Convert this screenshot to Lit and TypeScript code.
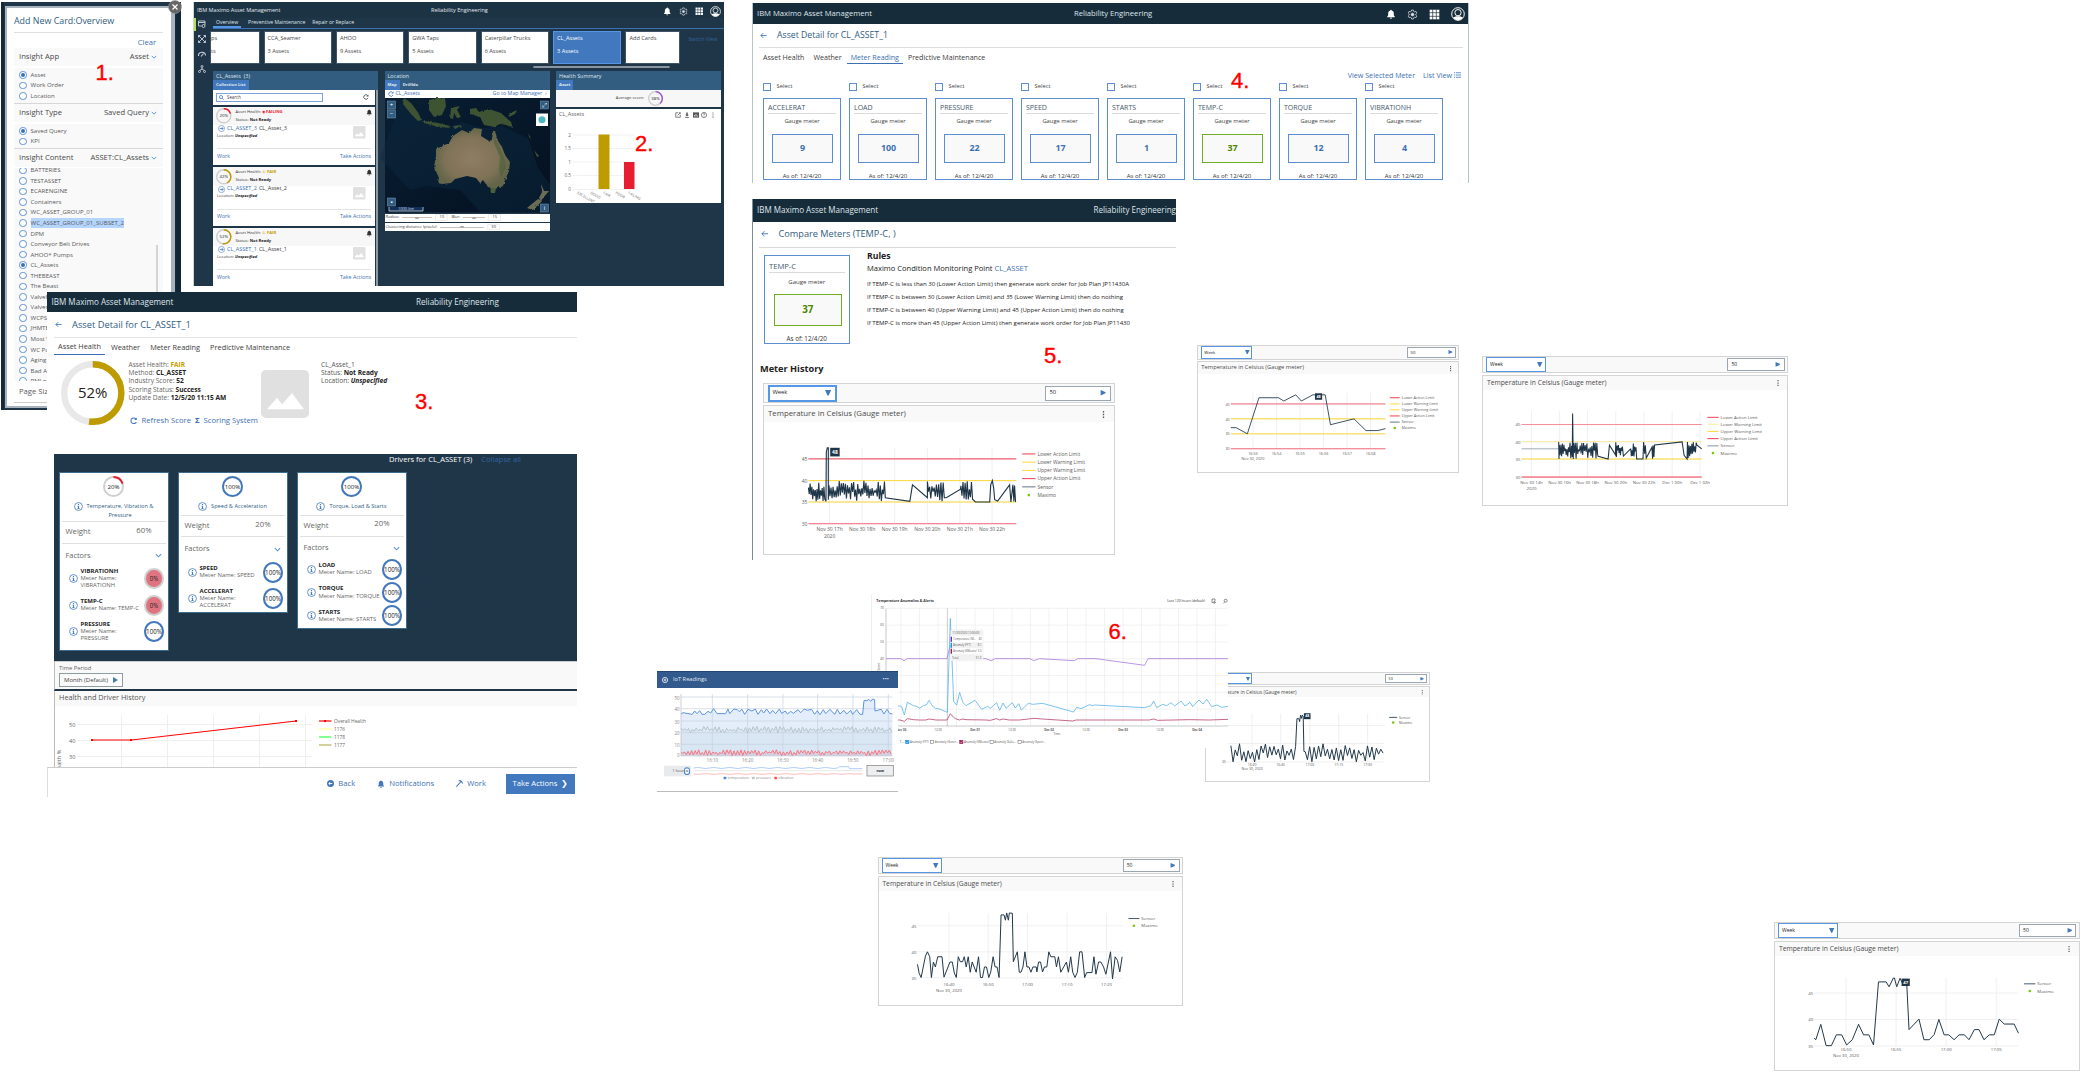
import { LitElement, html, css, svg, nothing } from "lit";
import { customElement, property } from "lit/decorators.js";

const base = css`
  :host { display: block; box-sizing: border-box; font-family: "Open Sans", "Noto Sans", sans-serif; color: #3c3c3c; line-height: 1; white-space: nowrap; }
  * { box-sizing: border-box; }
  svg { display: block; flex: none; overflow: visible; }
  b { font-weight: 700; color: #222; }
  .row { display: flex; align-items: center; }
  .grow { flex: 1; }
  .link { color: #3d70b2; }
  .bar { display: flex; align-items: center; background: #172c3b; color: #dfe5ea; }
`;

/* ---------- icons ---------- */
const bell = (s: number, c: string) => html`<svg width=${s} height=${s} viewBox="0 0 16 16"><path fill=${c} d="M8 1c-.7 0-1.2.5-1.2 1.2C4.6 2.800 3.500 4.500 3.500 6.800V10L2 12v1h12v-1l-1.500-2V6.800c0-2.300-1.100-4-3.300-4.600C9.200 1.500 8.700 1 8 1zM6.300 14a1.700 1.700 0 0 0 3.400 0z"/></svg>`;
const gear = (s: number, c: string) => html`<svg width=${s} height=${s} viewBox="0 0 16 16" fill="none" stroke=${c}><path stroke-width="1.100" d="M6.700 1.500h2.600l.4 1.800 1.500.8 1.800-.6 1.300 2.200-1.400 1.300v2l1.400 1.300-1.300 2.200-1.800-.6-1.500.8-.4 1.800H6.700l-.4-1.800-1.500-.8-1.800.6-1.300-2.200L3.100 9V7L1.700 5.700 3 3.500l1.800.6 1.500-.8z"/><circle cx="8" cy="8" r="2" fill=${c}/></svg>`;
const apps = (s: number, c: string) => html`<svg width=${s} height=${s} viewBox="0 0 16 16" fill=${c}>${[1, 6, 11].map(y => [1, 6, 11].map(x => svg`<rect x=${x} y=${y} width="4" height="4"/>`))}</svg>`;
const avatar = (s: number) => html`<svg width=${s} height=${s} viewBox="0 0 16 16"><circle cx="8" cy="8" r="7.200" fill="none" stroke="#fff" stroke-width="1.100"/><circle cx="8" cy="6.500" r="3.600" fill="none" stroke="#fff" stroke-width="1.100"/><path d="M2.500 12c3-2 8-2 11 0-1.300 2-3.300 3.200-5.500 3.200S3.800 14 2.500 12z" fill="#fff"/></svg>`;
const back = (s: number) => html`<svg width=${s} height=${s} viewBox="0 0 16 16" fill="none" stroke="#4178be" stroke-width="2"><path d="M15 8H2M7.500 2.500L2 8l5.500 5.500"/></svg>`;
const chevron = (s: number) => html`<svg width=${s} height=${s} viewBox="0 0 16 16" fill="none" stroke="#5596e6" stroke-width="2.600"><path d="M2 5l6 6 6-6"/></svg>`;
const refresh = (s: number, c: string) => html`<svg width=${s} height=${s} viewBox="0 0 16 16" fill="none" stroke=${c} stroke-width="2.200"><path d="M13.500 10.500A6 6 0 1 1 12.500 4"/><path d="M14.500 1v5.500H9z" fill=${c} stroke="none"/></svg>`;
const info = (s: number) => html`<svg width=${s} height=${s} viewBox="0 0 16 16"><circle cx="8" cy="8" r="7" fill="none" stroke="#4178be" stroke-width="1.400"/><path fill="#4178be" d="M7 3.500h2v2H7zM6.200 6.700H9v4.500h1v1.300H6v-1.300h1.200V8h-1z"/></svg>`;
const go = (s: number) => html`<svg width=${s} height=${s} viewBox="0 0 16 16" fill="none" stroke="#4178be" stroke-width="1.300"><circle cx="8" cy="8" r="7"/><path stroke-width="1.800" d="M4 8h7.500M8.500 4.800L11.700 8l-3.200 3.200"/></svg>`;
const picture = (w: number, h: number, cls: string) => html`<svg class=${cls} width=${w} height=${h} viewBox="0 0 48 50" preserveAspectRatio="none"><rect width="48" height="50" rx="5" fill="#e0e0e0"/><path fill="#fff" d="M6 41l10-12 5 7 10-12 12 17z"/></svg>`;
const kebab = (s: number) => html`<svg width=${s} height=${s} viewBox="0 0 16 16" fill="#555"><path d="M6.800 1h2.400v2.800H6.800zM6.800 6.600h2.400v2.800H6.800zM6.800 12.200h2.400V15H6.800z"/></svg>`;

const ring = (w: number, h: number, pct: number, color: string, label: string, fs: number, sw: number, fill = "none", track = "#cfcfcf") => {
  const r = 50 - sw / 2, c = 2 * Math.PI * r;
  return html`<svg width=${w} height=${h} viewBox="0 0 100 100" preserveAspectRatio="none">
    <circle cx="50" cy="50" r=${r} fill=${fill} stroke=${track} stroke-width=${sw}/>
    <circle cx="50" cy="50" r=${r} fill="none" stroke=${color} stroke-width=${sw} stroke-dasharray="${(c * pct) / 100} ${c}" transform="rotate(-90 50 50)"/>
    <text x="50" y="50" dy=".36em" text-anchor="middle" font-size=${fs} fill="#222">${label}</text></svg>`;
};

/* ---------- chart data helpers ---------- */
const noise = (x0: number, x1: number, step: number, hi: number, lo: number, seed: number) => {
  let s = seed, up = true, out = "";
  for (let x = x0; x <= x1; x += step) {
    s = (s * 16807) % 2147483647;
    const f = (s % 1000) / 1000, mid = (hi + lo) / 2;
    out += `${x.toFixed(1)},${(up ? hi + f * (mid - hi) : lo - f * (lo - mid)).toFixed(1)} `;
    up = !up;
  }
  return out;
};

interface Chart {
  box: string; fs: number; x0: number; x1: number; y0: number; y1: number;
  ys: [string, number][]; xs: [string, number][]; sub: [string, number, number]; xl: number;
  limits: [number, string][]; line: string; faint?: string; sw: number;
  lx: number; lw: number; ly: number[]; legend: [string, string][]; badge?: [string, number, number];
}
const RED = "#ef3b4d", YEL = "#fdd835", PALE = "#fdeb9a", INK = "#1f3648";
const limitsLegend: [string, string][] = [["Lower Action Limit", RED], ["Lower Warning Limit", YEL], ["Upper Warning Limit", YEL], ["Upper Action Limit", RED], ["Sensor", "#5f7482"], ["Maximo", ""]];
const sensorLegend: [string, string][] = [["Sensor", "#41586a"], ["Maximo", ""]];

const charts: Record<string, Chart> = {
  main: {
    box: "52 631 1056 449", fs: 15, x0: 186, x1: 813, y0: 757, y1: 988, ys: [["45", 791], ["40", 857], ["35", 922], ["30", 988]],
    xs: [["Nov 30 17h", 250], ["Nov 30 18h", 348], ["Nov 30 19h", 446], ["Nov 30 20h", 545], ["Nov 30 21h", 643], ["Nov 30 22h", 740]],
    sub: ["2020", 250, 1026], xl: 1006, limits: [[791, RED], [857, YEL], [922, YEL], [988, "#f4667a"]], sw: 3.4,
    line: noise(186, 237, 2.6, 857, 922, 7) + "239,920 240,770 243,757 246,757 246,915 " + noise(248, 416, 3.1, 857, 922, 91) + "418,909 492,920 500,870 545,909 " + noise(545, 595, 3.4, 857, 922, 41) + "596,909 602,909 645,883 " + noise(646, 684, 3.2, 857, 922, 13) + "690,922 733,922 736,870 741,857 745,880 748,915 757,919 793,870 797,922 803,870 806,920 808,872 811,922",
    lx: 831, lw: 40, ly: [776, 801, 826, 851, 876, 901], legend: limitsLegend, badge: ["48", 266, 770],
  },
  early: {
    box: "37 66 785 337", fs: 11.4, x0: 136, x1: 603, y0: 160, y1: 332, ys: [["45", 195], ["40", 240], ["35", 286], ["30", 332]],
    xs: [["16:53", 203], ["16:54", 274], ["16:55", 345], ["16:56", 416], ["16:57", 487], ["16:58", 558]], sub: ["Nov 30, 2020", 203, 362], xl: 348,
    limits: [[194, "#f4667a"], [240, YEL], [286, YEL], [332, "#f4667a"]], sw: 2.6,
    line: "136,267 152,267 186,286 221,175 280,175 296,185 332,166 349,185 384,166 421,166 437,258 508,240 544,276 580,276 603,270",
    lx: 616, lw: 30, ly: [175, 194, 212, 231, 250, 268], legend: limitsLegend, badge: ["48", 401, 171],
  },
  wide: {
    box: "37 94 916 391", fs: 13, x0: 153, x1: 696, y0: 200, y1: 401, ys: [["45", 241], ["40", 294], ["35", 347], ["30", 401]],
    xs: [["Nov 30 14h", 183], ["Nov 30 16h", 268], ["Nov 30 18h", 352], ["Nov 30 20h", 437], ["Nov 30 22h", 522], ["Dec 1 00h", 607], ["Dec 1 02h", 691]],
    sub: ["2020", 183, 437], xl: 419, limits: [[241, "#f78a98"], [293, PALE], [346, YEL], [401, RED]], sw: 3.2, faint: "153,315 266,315",
    line: "265,294 266,346 " + noise(267, 305, 2.3, 294, 346, 19) + "306,340 307,207 309,346 " + noise(310, 383, 2.5, 294, 346, 77) + "384,338 414,346 418,304 436,333 " + noise(437, 457, 2, 294, 346, 5) + "460,337 482,315 " + noise(482, 498, 2, 294, 346, 53) + "500,346 519,346 521,294 524,330 526,304 529,343 546,310 548,345 550,305 552,340 554,303 637,294 643,335 652,346 " + noise(653, 680, 2.2, 294, 346, 31) + "682,304 696,315",
    lx: 713, lw: 34, ly: [219, 240, 262, 284, 306, 328], legend: [["Lower Action Limit", RED], ["Lower Warning Limit", PALE], ["Upper Warning Limit", YEL], ["Upper Action Limit", RED], ["Sensor", "#8394a0"], ["Maximo", ""]],
  },
  half: {
    box: "23 78 915 388", fs: 13, x0: 139, x1: 756, y0: 186, y1: 383, ys: [["45", 225], ["40", 304], ["35", 383]],
    xs: [["16:40", 234], ["16:50", 352], ["17:00", 471], ["17:10", 590], ["17:20", 709]], sub: ["Nov 30, 2020", 234, 420], xl: 402, limits: [], sw: 3,
    line: "139,342 144,369 150,382 163,317 169,304 176,319 181,382 187,335 193,350 200,319 213,319 219,381 237,335 244,335 250,368 256,382 262,319 268,334 275,334 280,319 286,350 292,319 298,366 304,335 316,366 323,319 329,382 335,382 341,350 347,350 354,382 360,365 367,319 373,350 379,350 385,382 391,192 400,192 404,208 408,186 413,208 416,186 425,187 428,334 440,304 446,366 451,366 457,350 463,304 469,350 475,350 481,366 487,350 497,350 499,365 504,335 510,335 516,365 522,350 529,350 535,304 541,319 553,319 558,350 564,319 571,366 588,335 594,366 601,319 607,366 614,382 621,366 628,304 635,304 643,382 649,367 665,367 671,319 677,372 685,335 692,335 700,350 707,372 721,304 727,386 735,319 742,330 749,365 756,319",
    lx: 775, lw: 33, ly: [203, 225], legend: sensorLegend,
  },
  close: {
    box: "27 78 915 392", fs: 13, x0: 145, x1: 761, y0: 186, y1: 395, ys: [["45", 233], ["40", 314], ["35", 395]],
    xs: [["16:50", 241], ["16:55", 392], ["17:00", 543], ["17:05", 694]], sub: ["Nov 30, 2020", 241, 423], xl: 406, limits: [], sw: 3,
    line: "145,371 150,376 165,329 181,394 197,394 212,361 228,361 243,392 260,376 279,329 294,361 310,361 324,392 339,199 362,199 371,214 384,187 387,187 394,214 404,188 412,205 424,200 431,345 461,313 476,376 492,376 507,360 521,314 537,361 551,361 567,376 582,361 598,361 612,376 628,345 642,345 657,376 673,361 688,361 703,313 718,328 748,328 761,356",
    lx: 778, lw: 34, ly: [205, 227], legend: sensorLegend, badge: ["47", 421, 200],
  },
  tail: {
    box: "1665 288 672 289", fs: 10.5, x0: 1728, x1: 2203, y0: 370, y1: 520, ys: [["45", 407], ["40", 463], ["35", 520]],
    xs: [["16:30", 1804], ["16:45", 1890], ["17:00", 1978], ["17:15", 2065], ["17:30", 2152]], sub: ["Nov 30, 2020", 1804, 542], xl: 529, limits: [], sw: 3,
    line: noise(1740, 1936, 6.5, 463, 520, 61) + "1939,386 1945,386 1947,395 1950,375 1953,385 1955,375 1958,380 1960,487 " + noise(1964, 2203, 6.7, 463, 520, 99),
    lx: 2217, lw: 24, ly: [382, 398], legend: sensorLegend, badge: ["48", 1970, 378],
  },
};

@customElement("chart-card")
export class ChartCard extends LitElement {
  @property() kind = "main";
  static styles = [base, css`
    .tools { height: 2em; border: .1em solid #d4d4d4; background: #f9f9f9; justify-content: space-between; padding: 0 .25em 0 .4em; }
    .sel { width: 6.9em; height: 1.7em; border: .2em solid #5596e6; background: #fff; padding: 0 .3em 0 .3em; justify-content: space-between; }
    .num { width: 6.6em; height: 1.5em; border: .1em solid #9aa7b0; background: #fff; padding: 0 .35em; justify-content: space-between; }
    .t { font-size: .58em; color: #222; }
    .tri { width: .62em; height: .55em; }
    .panel { margin-top: .2em; height: 15em; border: .1em solid #d4d4d4; background: #fff; display: flex; flex-direction: column; }
    .head { height: 1.6em; flex: none; background: #f9f9f9; padding: 0 .7em 0 .45em; justify-content: space-between; }
    .title { font-size: .78em; color: #4b4b4b; }
    .dots { width: .7em; height: .7em; }
    .plot { flex: 1; width: 100%; min-height: 0; }
  `];
  render() {
    const c = charts[this.kind];
    const [bx, by, bw, bh] = c.box.split(" ").map(Number);
    const top = by + (bh * 16) / 150;
    return html`
      <div class="row tools">
        <div class="row sel"><span class="t">Week</span><svg class="tri" viewBox="0 0 10 9"><path d="M0 0h10L6 9H4z" fill="#4178be"/></svg></div>
        <div class="row num"><span class="t">50</span><svg class="tri" viewBox="0 0 10 9"><path d="M1 0l8 3.500v2L1 9z" fill="#4178be"/></svg></div>
      </div>
      <div class="panel">
        <div class="row head"><span class="title">Temperature in Celsius (Gauge meter)</span><svg class="dots" viewBox="0 0 16 16" fill="#555"><path d="M6.500 0h3v3.500h-3zM6.500 6.300h3v3.500h-3zM6.500 12.500h3V16h-3z"/></svg></div>
        <svg class="plot" viewBox="${bx} ${top} ${bw} ${by + bh - top}" preserveAspectRatio="none" font-size=${c.fs} fill="#5a5a5a">
          ${c.xs.map(([t, x]) => svg`<path d="M${x} ${c.y0}V${c.y1}" stroke="#ededed" stroke-width="2.500"/><text x=${x} y=${c.xl} dy=".36em" text-anchor="middle">${t}</text>`)}
          ${c.ys.map(([t, y]) => svg`<path d="M${c.x0} ${y}H${c.x1}" stroke="#ededed" stroke-width="2.500"/><text x=${c.x0 - 3} y=${y + 1} dy=".36em" text-anchor="end">${t}</text>`)}
          <text x=${c.sub[1]} y=${c.sub[2]} dy=".36em" text-anchor="middle">${c.sub[0]}</text>
          ${c.limits.map(([y, col]) => svg`<path d="M${c.x0} ${y}H${c.x1}" stroke=${col} stroke-width="3"/>`)}
          ${c.faint ? svg`<polyline points=${c.faint} fill="none" stroke="#9fabb4" stroke-width="3"/>` : nothing}
          <polyline points=${c.line} fill="none" stroke=${INK} stroke-width=${c.sw}/>
          ${c.badge ? svg`<rect x=${c.badge[1] - c.fs * 0.95} y=${c.badge[2] - c.fs * 0.85} width=${c.fs * 1.9} height=${c.fs * 1.75} fill=${INK}/><text x=${c.badge[1]} y=${c.badge[2]} dy=".36em" text-anchor="middle" fill="#fff" font-weight="700">${c.badge[0]}</text>` : nothing}
          ${c.legend.map(([t, col], i) => svg`${col ? svg`<path d="M${c.lx} ${c.ly[i]}h${c.lw}" stroke=${col} stroke-width="3"/>` : svg`<circle cx=${c.lx + c.lw / 2} cy=${c.ly[i]} r="4" fill="#7ac70c"/>`}<text x=${c.lx + c.lw + 6} y=${c.ly[i]} dy=".36em">${t}</text>`)}
        </svg>
      </div>`;
  }
}

@customElement("add-card-dialog")
export class AddCardDialog extends LitElement {
  static styles = [base, css`
    :host { height: 408px; padding: 4px 6px 2px 4px; background: linear-gradient(90deg, #14293a 0 3px, #1f3648 3px 172px, #12263a 176px); overflow: hidden; font-size: 6.100px; color: #5a5a5a; }
    .frame { height: 402px; width: 170px; border: 2px solid #a9b3bd; border-right-width: 4px; background: #fff; padding: 0 8px 0 7px; }
    .title { font-size: 8.900px; color: #325c80; height: 25px; border-bottom: 1px solid #e0e0e0; padding-top: 9px; }
    .clear { font-size: 7.600px; height: 15px; display: flex; justify-content: flex-end; align-items: center; padding: 4px 7px 0 0; }
    .sec { height: 18px; background: #f9f9f9; padding: 0 6px 0 5px; justify-content: space-between; font-size: 7.650px; color: #4a4a4a; }
    .sec .row { gap: 2px; }
    .opts { background: #f9f9f9; border-bottom: 1px solid #d8d8d8; padding: 1.500px 0 0 5px; margin-top: 2px; display: flex; flex-direction: column; }
    .opt { height: 10.550px; gap: 4px; flex: none; }
    .dot { width: 7.500px; height: 7.500px; border: 1px solid #5e92d6; border-radius: 50%; background: #fff; flex: none; display: flex; align-items: center; justify-content: center; }
    .dot i { width: 4px; height: 4px; border-radius: 50%; background: #3d70b2; }
    .hl { background: #b4d5fe; padding: 2px 0; }
    .lists { display: flex; height: 213px; margin-top: 1px; overflow: hidden; background: #f9f9f9; justify-content: space-between; }
    .list { margin-top: -3px; padding-left: 5px; display: flex; flex-direction: column; }
    .thumb { width: 2px; margin: 77px 5px 0 0; background: #d5d5d5; }
    .page { font-size: 7.650px; padding: 7px 5px; height: 22px; border-bottom: 1px solid #ccc; }
    .app { height: 36px; } .type { height: 25px; }
  `];
  opt(t: string, on = false, hl = false) {
    return html`<div class="row opt"><span class="dot">${on ? html`<i></i>` : nothing}</span><span class=${hl ? "hl" : ""}>${t}</span></div>`;
  }
  sec(a: string, b: string) {
    return html`<div class="row sec"><span>${a}</span><span class="row">${b} ${chevron(6)}</span></div>`;
  }
  render() {
    const names = ["BATTERIES", "TESTASSET", "ECARENGINE", "Containers", "WC_ASSET_GROUP_01", "WC_ASSET_GROUP_01_SUBSET_2", "DPM", "Conveyor Belt Drives", "AHOO* Pumps", "CL_Assets", "THEBEAST", "The Beast", "Valvefeed", "Valves", "WCPS", "JHMTEST", "Most Wanted", "WC Pumps", "Aging", "Bad Actors", "PMI pumps"];
    return html`<div class="frame">
      <div class="title">Add New Card:Overview</div>
      <div class="clear link">Clear</div>
      ${this.sec("Insight App", "Asset")}
      <div class="opts app">${this.opt("Asset", true)}${this.opt("Work Order")}${this.opt("Location")}</div>
      ${this.sec("Insight Type", "Saved Query")}
      <div class="opts type">${this.opt("Saved Query", true)}${this.opt("KPI")}</div>
      ${this.sec("Insight Content", "ASSET:CL_Assets")}
      <div class="lists"><div class="list">${names.map(n => this.opt(n, n === "CL_Assets", n.endsWith("SUBSET_2")))}</div><div class="thumb"></div></div>
      <div class="page">Page Size</div>
    </div>`;
  }
}

@customElement("overview-window")
export class OverviewWindow extends LitElement {
  static styles = [base, css`
    :host { height: 284px; background: #1f3648; font-size: 6px; overflow: hidden; border-left: 1px solid #cfd8d0; }
    .top { height: 16px; color: #e3e8ec; font-size: 5.550px; padding: 2px 3px 0 3px; background: #1c3344; }
    .name { width: 234px; } .ic { gap: 7px; }
    .body { display: flex; }
    .rail { width: 16px; padding: 2px 0 0 0; display: flex; flex-direction: column; gap: 7px; align-items: center; }
    .mark { position: absolute; left: 0; top: 16px; width: 2px; height: 13px; background: #b4e051; }
    .main { flex: 1; min-width: 0; }
    .tabs { height: 10.500px; border-bottom: 1px solid #3d70b2; gap: 7px; margin-left: 3px; color: #dfe5ea; font-size: 5.100px; align-items: stretch; }
    .tabs span { padding: 2px 0 0 3px; } .tabs .on { border-bottom: 2px solid #5596e6; padding-right: 3px; }
    .tabs span + span { padding-left: 0; }
    .cards { height: 37px; gap: 4px; padding-top: 2px; align-items: flex-start; }
    .card { width: 68.400px; height: 33.500px; background: #fff; padding: 4px 3px; display: flex; flex-direction: column; gap: 8px; border: 1px solid #3f5566; color: #444; font-size: 5.600px; flex: none; }
    .card.first { width: 49.500px; padding-left: 0; } .card.last { width: 55px; }
    .card.on { background: #4178be; color: #fff; border-color: #5596e6; }
    .switch { color: #34649f; padding: 6px 0 0 4px; font-size: 5.300px; }
    .scroll { height: 2.500px; width: 137px; margin: 0 0 0 323px; border: 1px solid #8995a0; border-radius: 2px; background: #4a5b69; }
    .cols { display: flex; gap: 6.500px; padding: 3px 0 0 3px; }
    .col { width: 165px; }
    .h { height: 18.500px; background: #325c80; color: #dfe8ef; padding: 2.500px 0 0 3px; font-size: 5.450px; display: flex; flex-direction: column; justify-content: space-between; }
    .sub { margin-left: -3px; display: flex; font-size: 4.200px; font-weight: 700; }
    .sub span { padding: 2.500px 3px 2.500px; } .sub .on { background: #4178be; }
    .list { background: #8f9ba5; padding-right: 2px; }
    .inner { background: #1f3648; display: flex; flex-direction: column; gap: 2px; border-right: 1px solid #1f3648; }
    .search { height: 15px; background: #fff; padding: 0 6px 0 3px; justify-content: space-between; font-size: 4.400px; }
    .box { width: 107px; height: 9px; border: 1px solid #7fa5d8; gap: 3px; padding: 0 2px; }
    .asset { height: 58.500px; background: #fff; }
    .a1 { height: 18.500px; background: #f7f7f7; padding: 0 3px; font-size: 4.150px; gap: 4px; }
    .a1 .two { display: flex; flex-direction: column; gap: 4px; flex: 1; }
    .bell { align-self: flex-start; padding-top: 2px; }
    .a2 { height: 24px; margin: 0 4px; border-bottom: 1px solid #e3e3e3; display: flex; justify-content: space-between; font-size: 5.500px; }
    .a2 .loc { font-size: 4px; margin-top: 1.500px; } .a2 .row { gap: 2px; padding-left: 1px; }
    .a2 .pic { margin: 1px 6px 0 0; }
    .a3 { height: 15px; padding: 0 4px; justify-content: space-between; font-size: 5.300px; }
    .r { color: #e71d32; } .f { color: #c8a000; }
    .maplink { height: 8px; background: #fff; font-size: 5.350px; padding: 0 3px; gap: 2px; }
    .sl { height: 8px; background: #fff; margin-top: 1.500px; font-size: 4.100px; gap: 3px; padding-left: 1px; }
    .sl i { width: 30px; height: 1px; background: #c2c2c2; display: flex; align-items: center; justify-content: center; }
    .sl i.mid { width: 22px; } .sl i.long { width: 44px; }
    .sl i::after { content: ""; width: 4px; height: 2px; border-radius: 1px; background: #aaa; }
    .sl .v { border: 1px solid #eee; padding: 0 3px; width: 13px; }
    .score { height: 17.500px; background: #f7f7f7; justify-content: flex-end; padding-right: 58px; gap: 4px; font-size: 4.150px; }
    .sum { margin-top: 2px; height: 94px; background: #fff; }
    .sum .t { height: 11px; padding: 0 5px 0 3px; gap: 2.700px; font-size: 5.500px; color: #666; }
  `];
  asset(n: number, pct: number, st: string, cls: string, col: string) {
    return html`<div class="asset">
      <div class="row a1">${ring(15.5, 15.5, pct, col, pct + "%", 28, 9)}<div class="two"><span>Asset Health: <span class=${cls}>${cls === "r" ? "◉" : "⚠"} <b class=${cls}>${st}</b></span></span><span>Status: <b>Not Ready</b></span></div><div class="bell">${bell(6.5, "#333")}</div></div>
      <div class="a2"><div><div class="row">${go(7)}<span class="link">CL_ASSET_${n}</span><span>CL_Asset_${n}</span></div><div class="loc">Location: <i><b>Unspecified</b></i></div></div>${picture(12.5, 12.5, "pic")}</div>
      <div class="row a3 link"><span>Work</span><span>Take Actions</span></div></div>`;
  }
  map() {
    const box = (x: number, y: number, t: string) => svg`<rect x=${x} y=${y} width="8" height="8" fill="#325c80" stroke="#7f9db9" stroke-width=".5"/><text x=${x + 4} y=${y + 6} font-size="6" fill="#fff" text-anchor="middle">${t}</text>`;
    return html`<svg width="165" height="114.500" viewBox="385 98 165 114.500" preserveAspectRatio="none">
      <defs><linearGradient id="sea" x1="0" y1="0" x2="1" y2="1"><stop offset="0" stop-color="#0a1f33"/><stop offset=".5" stop-color="#06182a"/><stop offset="1" stop-color="#050f1f"/></linearGradient>
      <radialGradient id="land"><stop offset="0" stop-color="#8f7e62"/><stop offset=".7" stop-color="#7f7257"/><stop offset="1" stop-color="#64664a"/></radialGradient>
      <filter id="grain" x="-10%" y="-10%" width="120%" height="120%"><feTurbulence type="fractalNoise" baseFrequency=".35" numOctaves="3" result="n"/><feDisplacementMap in="SourceGraphic" in2="n" scale="2.500"/></filter></defs>
      <rect x="385" y="98" width="165" height="114.500" fill="url(#sea)"/>
      <path d="M402 98l10 12 14 12 26 4 10-4 20 6 20-2 26 12 10 30 12 16v28h-70l-20-22-34-4-16 4-30-32z" fill="#0d2a40" opacity=".45"/>
      <g filter="url(#grain)" fill="#3d5233">
        <path d="M404 98l7 5 6 8 5 9-4 1-7-7-8-10z"/><path d="M424 121l14 2 12 3-1 2-14-2-11-3z"/>
        <path d="M429 100l8-2h8l1 8-4 9-8 2-5-7z"/><path d="M451 108l9-2-3 4 4 7-4 1-3-5-1 6-3-1z"/>
        <path d="M470 109l6-1 3 4 10-3 12 4 10 9 2 6-7-3-6-1-6 3-10-2-4-8-10-3z"/><path d="M508 114l9-4-2 4-6 3zM453 126l10-1-8 4zM529 134l2 5-2-2zM534 150l5 6-2 1z"/>
      </g>
      <g filter="url(#grain)"><path fill="url(#land)" d="M436 156l0-7 13-6 4-7 6-4 3-2 7 3 5-5 8 1-1 7 8 5 3-1 1-9 2 0 3 10 4 6 3 8 5 7-1 9-4 9-2 6-8 3-7-2-5-7-3 3-4-5-9-2-12 3-4 4-9 1-4-1 1-5-5-11z"/>
      <path fill="#4c5f3c" d="M490 188l6 0-1 5-4 0z"/><path fill="#6b6d55" d="M541 184l3 7 5 0-6 7-2 3-2-3 3-6zM538 199l4 2-9 9-6-2z"/><path fill="#4a6139" opacity=".6" d="M494 137l5 8 5 12 2 10-5 10-2-8 1-12-6-14z"/></g>
      ${box(387.5, 101, "+")}${box(387.5, 110, "−")}${box(540.5, 101, "⤢")}${box(387.500, 198, "▪")}${box(540.5, 204, "i")}
      <rect x="536" y="113.500" width="12" height="12.500" fill="#fff"/><circle cx="542" cy="119.700" r="3.500" fill="#4ab9c4"/>
      <path d="M389 207v4h34v-4" stroke="#c9d4e0" fill="#12305a" stroke-width=".8"/><text x="406" y="210.300" font-size="4" fill="#cfd8e2" text-anchor="middle">1000 km</text></svg>`;
  }
  render() {
    const cards: [string, string, string][] = [["ps", "ts", "first"], ["CCA_Seamer", "3 Assets", ""], ["AHOO", "9 Assets", ""], ["GWA Taps", "5 Assets", ""], ["Caterpillar Trucks", "6 Assets", ""], ["CL_Assets", "3 Assets", "on"], ["Add Cards", "", "last"]];
    const c = "#c8d2da";
    return html`<div class="row top"><span class="name">IBM Maximo Asset Management</span><span class="grow">Reliability Engineering</span><span class="row ic">${bell(8.5, "#fff")}${gear(9, "#dfe5ea")}${apps(8.500, "#fff")}${avatar(11)}</span></div>
    <div class="mark"></div>
    <div class="body"><div class="rail">
      <svg width="8" height="8" viewBox="0 0 16 16" fill="none" stroke=${c} stroke-width="1.800"><path d="M1 2h13v8M1 2v10h6M1 5h13"/><circle cx="11" cy="12" r="3"/></svg>
      <svg width="8" height="8" viewBox="0 0 16 16" fill="none" stroke=${c} stroke-width="1.800"><path d="M1 1l14 14M15 1L1 15M1 5V1h4M15 5V1h-4M1 11v4h4M15 11v4h-4"/></svg>
      <svg width="8" height="8" viewBox="0 0 16 16" fill="none" stroke=${c} stroke-width="2.200"><path d="M1 12a7 7 0 0 1 14-1M6 13l5-6"/></svg>
      <svg width="8" height="8" viewBox="0 0 16 16" fill="none" stroke=${c} stroke-width="1.800"><circle cx="8" cy="3" r="2"/><circle cx="3" cy="13" r="2"/><circle cx="13" cy="13" r="2"/><path d="M8 5v4M3 11l5-3 5 3"/></svg>
    </div><div class="main">
      <div class="row tabs"><span class="on">Overview</span><span>Preventive Maintenance</span><span>Repair or Replace</span></div>
      <div class="row cards">${cards.map(([a, b, k]) => html`<div class="card ${k}"><span>${a}</span><span>${b}</span></div>`)}<span class="switch">Switch View</span></div>
      <div class="scroll"></div>
      <div class="cols">
        <div class="col"><div class="h"><span>CL_Assets &nbsp;(3)</span><div class="sub"><span class="on">Collection List</span></div></div>
          <div class="list"><div class="inner"><div class="row search"><span class="row box"><svg width="5" height="5" viewBox="0 0 16 16" fill="none" stroke="#4178be" stroke-width="2.500"><circle cx="6.500" cy="6.500" r="5"/><path d="M10 10l5 5"/></svg>Search</span>${refresh(6, "#444")}</div>
          ${this.asset(3, 20, "FAILING", "r", "#e71d32")}${this.asset(2, 42, "FAIR", "f", "#be9b00")}${this.asset(1, 52, "FAIR", "f", "#be9b00")}</div></div></div>
        <div class="col"><div class="h"><span>Location</span><div class="sub"><span class="on">Map</span><span>DrillIdo</span></div></div>
          <div class="row maplink link">${refresh(6, "#4178be")}<span class="grow">CL_Assets</span><span>Go to Map Manager &nbsp;›</span></div>
          ${this.map()}
          <div class="row sl"><span>Radius:</span><i></i><span class="v">10</span><span>Blur:</span><i class="mid"></i><span class="v">15</span></div>
          <div class="row sl"><span>Clustering distance (pixels):</span><i class="long"></i><span class="v">30</span></div></div>
        <div class="col"><div class="h"><span>Health Summary</span><div class="sub"><span class="on">Asset</span></div></div>
          <div class="row score"><span>Average score:</span>${ring(15, 15, 38, "#9855d4", "38%", 28, 9)}</div>
          <div class="sum"><div class="row t"><span class="grow">CL_Assets</span>
            <svg width="6" height="6" viewBox="0 0 16 16" fill="none" stroke="#555" stroke-width="2"><path d="M8 2H2v12h12V8M7 9l7-7M10 2h4v4"/></svg>
            <svg width="6" height="6" viewBox="0 0 16 16" fill="#555"><path d="M6 1h4v6h3l-5 5-5-5h3zM3 13h10v2H3z"/></svg>
            <svg width="6" height="6" viewBox="0 0 16 16" fill="#555"><path d="M0 1h16v14H0z"/><path d="M3 8h2v4H3zM7 5h2v7H7zM11 9h2v3h-2z" fill="#fff"/></svg>
            <svg width="6" height="6" viewBox="0 0 16 16" fill="none" stroke="#555" stroke-width="1.800"><circle cx="8" cy="8" r="7"/><path d="M6 6c0-3 4-3 4-.5C10 7 8 7 8 9.500M8 11v1.500"/></svg>${kebab(6)}</div>
            <svg width="165" height="83" viewBox="556 120 165 83" font-size="4.600" fill="#666">
              ${[["2", 135], ["1.5", 148.5], ["1", 162], ["0.5", 175.5], ["0", 189.5]].map(([t, y]) => svg`<path d="M573 ${y}h62" stroke="#eee" stroke-width=".8"/><text x="571" y=${Number(y) + 1.700} text-anchor="end">${t}</text>`)}
              <path d="M598.500 134.500h11V189h-11z" fill="#be9b00"/><path d="M624 162h10.500v27H624z" fill="#e71d32"/>
              ${[["EXCELLENT", 577], ["GOOD", 590], ["FAIR", 603], ["POOR", 615], ["FAILING", 628]].map(([t, x]) => svg`<text font-size="3.700" transform="translate(${x} 193.500) rotate(30)">${t}</text>`)}
            </svg></div></div>
      </div></div></div>`;
  }
}

@customElement("health-window")
export class HealthWindow extends LitElement {
  static styles = [base, css`
    :host { height: 505px; background: #fff; font-size: 6.600px; }
    .bar { height: 20px; font-size: 8.100px; padding-left: 4.500px; } .bar .n { width: 364.500px; }
    .title { height: 26px; margin-left: 7px; border-bottom: 1px solid #e4e4e4; font-size: 9.300px; color: #325c80; gap: 10px; padding: 0 0 0 1px; }
    .tabs { height: 16.500px; margin-left: 7px; font-size: 7.350px; gap: 10px; align-items: stretch; }
    .tabs span { display: flex; align-items: center; padding-top: 2px; } .tabs .on { padding-left: 4px; padding-right: 4px; margin-right: -4px; border-bottom: 1.500px solid #3d70b2; }
    .sum { height: 99px; padding: 6px 0 0 14px; display: flex; }
    .facts { width: 131px; margin-left: 4px; display: flex; flex-direction: column; gap: 1.900px; color: #666; padding-top: 1px; }
    .facts .fair { color: #c8a000; }
    .acts { margin-top: 13px; gap: 4px; font-size: 7.700px; padding-left: 1.500px; }
    .pic { margin: 9px 0 0 1px; }
    .meta { margin: 1.500px 0 0 12.500px; display: flex; flex-direction: column; gap: 1.500px; color: #555; }
    .drv { margin-left: 7px; height: 207px; background: #1f3648; }
    .dh { height: 18px; padding: 0 56px 5px 0; justify-content: flex-end; gap: 9px; font-size: 7.550px; color: #fff; }
    .dh .c { color: #34649f; }
    .cards { display: flex; gap: 9px; padding-left: 4.500px; align-items: flex-start; }
    .dc { width: 110px; background: #fff; border: 1px solid #3d6c8c; padding: 3px 2px 0; display: flex; flex-direction: column; }
    .dc.s { height: 141px; } .dc.m { height: 157px; } .dc.l { height: 179px; }
    .rg { display: flex; justify-content: center; }
    .nm { display: flex; justify-content: center; align-items: flex-start; gap: 4px; padding-top: 5px; color: #325c80; text-align: center; font-size: 5.650px; line-height: 9.600px; min-height: 18px; }
    .w { height: 23px; border-top: 1px solid #e0e0e0; border-bottom: 1px solid #e0e0e0; padding: 0 14px 0 4px; justify-content: space-between; font-size: 7.700px; color: #666; }
    .w span + span { margin-top: -3px; }
    .fh { height: 22px; padding: 2px 4px 0 4px; justify-content: space-between; font-size: 7.400px; color: #666; }
    .ft { padding-left: 7px; gap: 3px; font-size: 5.900px; flex: none; color: #666; }
    .ft .x { width: 60px; line-height: 7.200px; } .ft b { font-size: 6px; }
    .h26 { height: 26.300px; } .h23 { height: 23.300px; }
    .per { margin-left: 7px; height: 30px; background: #f9f9f9; border-left: 1px solid #bbb; border-top: 1px solid #ccc; border-bottom: 2px solid #1f3648; padding: 4px 0 0 4px; font-size: 5.800px; color: #666; display: flex; flex-direction: column; gap: 2px; }
    .pb { width: 64px; height: 14px; border: 1px solid #8d9ea0; background: #fbfbfb; padding: 0 4px; justify-content: space-between; color: #444; font-size: 6px; }
    .hh { margin-left: 7px; height: 15px; background: #f9f9f9; border-left: 1px solid #bbb; padding-left: 4px; font-size: 7.300px; color: #555; }
    .ch { margin-left: 7px; height: 61.500px; border-left: 1px solid #bbb; overflow: hidden; }
    .foot { height: 29.500px; border-top: 1px solid #ccc; border-left: 1px solid #ddd; justify-content: flex-end; padding: 3px 2px 0 0; font-size: 7.650px; }
    .foot .row { gap: 4px; margin-right: 22px; }
    .foot .btn { background: #4178be; color: #fff; width: 69px; height: 19.500px; display: flex; align-items: center; justify-content: center; margin-left: -2px; }
  `];
  factor(n: string, ok: boolean, h: string, two = false) {
    return html`<div class="row ft ${h}">${info(9)}<div class="x"><b>${n}</b><br>Meter Name: ${two ? html`<br>` : nothing}${n}</div>${ok ? ring(20, 21, 100, "#4178be", "100%", 31, 10, "#fff") : ring(20, 21, 0, "#ccc", "0%", 30, 10, "#df7480")}</div>`;
  }
  render() {
    const leg: [string, string][] = [["Overall Health", "#f00"], ["1176", "#fdfd96"], ["1178", "#33ff4d"], ["1177", "#b5b25c"]];
    return html`<div class="bar"><span class="n">IBM Maximo Asset Management</span>Reliability Engineering</div>
      <div class="row title">${back(7)}Asset Detail for CL_ASSET_1</div>
      <div class="row tabs"><span class="on">Asset Health</span><span>Weather</span><span>Meter Reading</span><span>Predictive Maintenance</span></div>
      <div class="sum">${ring(63.5, 64, 52, "#be9b00", "52%", 23.500, 10, "none", "#e8e8e8")}
        <div class="facts"><span>Asset Health: <b class="fair">FAIR</b></span><span>Method: <b>CL_ASSET</b></span><span>Industry Score: <b>52</b></span><span>Scoring Status: <b>Success</b></span><span>Update Date: <b>12/5/20 11:15 AM</b></span>
          <div class="row acts link">${refresh(7.500, "#4178be")}Refresh Score <b class="link">Σ</b>Scoring System</div></div>
        ${picture(48, 48, "pic")}
        <div class="meta"><span>CL_Asset_1</span><span>Status: <b>Not Ready</b></span><span>Location: <b><i>Unspecified</i></b></span></div></div>
      <div class="drv"><div class="row dh"><span>Drivers for CL_ASSET (3)</span><span class="c">Collapse all</span></div>
        <div class="cards">
          <div class="dc l"><div class="rg">${ring(21, 21, 20, "#e71d32", "20%", 29, 9)}</div><div class="nm">${info(9)}<span>Temperature, Vibration &amp;<br>Pressure</span></div><div class="row w"><span>Weight</span><span>60%</span></div><div class="row fh"><span>Factors</span>${chevron(7)}</div>${this.factor("VIBRATIONH", false, "h26", true)}${this.factor("TEMP-C", false, "h26")}${this.factor("PRESSURE", true, "h26", true)}</div>
          <div class="dc s"><div class="rg">${ring(21, 21, 100, "#4178be", "100%", 29, 9)}</div><div class="nm">${info(9)}<span>Speed &amp; Acceleration</span></div><div class="row w"><span>Weight</span><span>20%</span></div><div class="row fh"><span>Factors</span>${chevron(7)}</div>${this.factor("SPEED", true, "h26")}${this.factor("ACCELERAT", true, "h26", true)}</div>
          <div class="dc m"><div class="rg">${ring(21, 21, 100, "#4178be", "100%", 29, 9)}</div><div class="nm">${info(9)}<span>Torque, Load &amp; Starts</span></div><div class="row w"><span>Weight</span><span>20%</span></div><div class="row fh"><span>Factors</span>${chevron(7)}</div>${["LOAD", "TORQUE", "STARTS"].map(n => this.factor(n, true, "h23"))}</div>
        </div></div>
      <div class="per"><span>Time Period</span><div class="row pb">Month (Default)<svg width="5" height="6" viewBox="0 0 5 6"><path d="M0 0l5 3-5 3z" fill="#4178be"/></svg></div></div>
      <div class="row hh">Health and Driver History</div>
      <div class="ch"><svg width="520" height="61.500" viewBox="55 706 520 61.500" font-size="5.600" fill="#666">
        ${[121.5, 167.5, 213.5, 259.5, 305.5].map(x => svg`<path d="M${x} 715v53" stroke="#efefef"/>`)}
        ${[["50", 724.5], ["40", 740.5], ["30", 756.5]].map(([t, y]) => svg`<path d="M77 ${y}h235" stroke="#efefef"/><text x="69" y=${Number(y) + 2.200}>${t}</text>`)}
        <path d="M92 740h39.500L296 721" stroke="#f00" fill="none"/><path fill="#f00" d="M91 739h2v2h-2zM130 739h2v2h-2zM295 720h2v2h-2z"/>
        ${leg.map(([t, c], i) => svg`<path d="M319 ${721 + i * 8}h12.500" stroke=${c} stroke-width="1.200"/><text x="334" y=${723 + i * 8} font-size="4.800">${t}</text>`)}
        <path d="M324 720h2v2h-2z" fill="#f00"/><text font-size="5.600" transform="translate(61 773) rotate(-90)">Health %</text></svg></div>
      <div class="row foot link"><span class="row"><svg width="7" height="7" viewBox="0 0 16 16"><circle cx="8" cy="8" r="8" fill="#4178be"/><path d="M12 6.800H7V4L3 8l4 4V9.200h5z" fill="#fff"/></svg>Back</span><span class="row">${bell(8, "#4178be")}Notifications</span><span class="row"><svg width="7" height="7" viewBox="0 0 16 16" fill="none" stroke="#4178be" stroke-width="2.500"><path d="M1 15L11 4M6 2c4-2 7 1 9 6"/></svg>Work</span><span class="btn">Take Actions&nbsp; ❯</span></div>`;
  }
}

const meterStyles = css`
  .mc { border: 1px solid #5b8fd0; background: #fff; display: flex; flex-direction: column; align-items: stretch; overflow: hidden; }
  .mc .nm { margin: 0 4px; border-bottom: 1px solid #dadada; color: #44586a; display: flex; align-items: flex-end; }
  .mc .g { text-align: center; color: #444; }
  .mc .v { border: 1px solid #5b8fd0; color: #3d70b2; background: #f9f9f9; display: flex; align-items: center; justify-content: center; font-weight: 700; }
  .mc .v.ok { border-color: #6fae25; color: #4b8400; }
`;

@customElement("meters-window")
export class MetersWindow extends LitElement {
  static styles = [base, meterStyles, css`
    :host { height: 180px; background: #fff; border-left: 1px solid #b9c3c9; border-right: 1px solid #b9c3c9; font-size: 6.200px; }
    .bar { height: 21px; font-size: 7.650px; padding: 1px 3px 0 4px; } .bar .n { width: 317px; } .ic { gap: 11px; }
    .title { height: 24px; margin: 0 5px 0 6px; border-bottom: 1px solid #dedede; font-size: 8.700px; color: #325c80; gap: 10px; padding: 0 0 0 1px; }
    .tabs { height: 16px; padding-left: 10px; font-size: 7.100px; gap: 9px; align-items: stretch; }
    .tabs span { display: flex; align-items: center; padding-top: 4px; } .tabs .on { color: #3d70b2; border-bottom: 1.500px solid #3d70b2; padding-left: 4px; padding-right: 4px; margin: 0 -4px; }
    .vs { height: 16.500px; justify-content: flex-end; padding: 6px 7px 0 0; gap: 8px; font-size: 7.150px; }
    .vs .row { gap: 2px; }
    .grid { display: flex; gap: 8px; padding: 2.500px 0 0 10px; }
    .m { width: 78px; }
    .sel { height: 8px; gap: 6px; color: #444; font-size: 5.800px; } .sel i { width: 7.500px; height: 8px; border: 1px solid #5b8fd0; }
    .mc { height: 82px; margin-top: 6.500px; }
    .mc .nm { height: 16px; font-size: 7px; padding-bottom: 1.500px; } .mc .g { padding-top: 5px; font-size: 5.800px; } .mc .v { height: 30px; margin: 9.500px 7px 0 8px; font-size: 8.900px; } .mc .d { padding-top: 10px; text-align: center; font-size: 6px; color: #333; }
  `];
  render() {
    const ms: [string, number][] = [["ACCELERAT", 9], ["LOAD", 100], ["PRESSURE", 22], ["SPEED", 17], ["STARTS", 1], ["TEMP-C", 37], ["TORQUE", 12], ["VIBRATIONH", 4]];
    return html`<div class="bar"><span class="n">IBM Maximo Asset Management</span><span class="grow">Reliability Engineering</span><span class="row ic">${bell(10, "#fff")}${gear(11, "#dfe5ea")}${apps(11, "#fff")}${avatar(14)}</span></div>
      <div class="row title">${back(7)}Asset Detail for CL_ASSET_1</div>
      <div class="row tabs"><span>Asset Health</span><span>Weather</span><span class="on">Meter Reading</span><span>Predictive Maintenance</span></div>
      <div class="row vs link"><span>View Selected Meter</span><span class="row">List View<svg width="7" height="6" viewBox="0 0 14 12" stroke="#4178be" stroke-width="1.600"><path d="M0 1.500h2.500M4 1.500h10M0 6h2.500M4 6h10M0 10.500h2.500M4 10.500h10"/></svg></span></div>
      <div class="grid">${ms.map(([n, v]) => html`<div class="m"><div class="row sel"><i></i>Select</div><div class="mc"><div class="nm">${n}</div><div class="g">Gauge meter</div><div class="v ${n === "TEMP-C" ? "ok" : ""}">${v}</div><div class="d">As of: 12/4/20</div></div></div>`)}</div>`;
  }
}

@customElement("compare-window")
export class CompareWindow extends LitElement {
  static styles = [base, meterStyles, css`
    :host { height: 361px; background: #fff; border-left: 1px solid #7e8c94; }
    .bar { height: 22.500px; font-size: 8.050px; padding-left: 4px; overflow: hidden; } .bar .n { width: 340px; }
    .title { height: 26px; margin-left: 6px; border-bottom: 1px solid #dadada; font-size: 9.200px; color: #325c80; gap: 10px; padding-left: 2px; }
    .top { display: flex; gap: 17.500px; padding: 7px 0 0 11px; }
    .mc { width: 85.500px; height: 89px; }
    .mc .nm { height: 17.500px; font-size: 7.600px; padding-bottom: 1px; } .mc .g { padding-top: 6.500px; font-size: 6.100px; } .mc .v { height: 32px; margin: 9px 7px 0 9px; font-size: 9.800px; } .mc .d { padding-top: 10.500px; text-align: center; font-size: 6.300px; color: #333; }
    .rules { display: flex; flex-direction: column; height: 80px; font-size: 6.070px; color: #222; }
    .rules b { font-size: 8.700px; margin-top: -2.500px; } .rules .p { font-size: 7.550px; margin: 4.500px 0 5px; } .rules .l { height: 13px; flex: none; display: flex; align-items: center; }
    .mh { font-size: 9.200px; padding: 20px 0 10.500px 7px; }
    chart-card { margin-left: 9.500px; width: 352px; font-size: 10px; }
  `];
  render() {
    return html`<div class="bar"><span class="n">IBM Maximo Asset Management</span>Reliability Engineering</div>
      <div class="row title">${back(7.500)}Compare Meters (TEMP-C, )</div>
      <div class="top"><div class="mc"><div class="nm">TEMP-C</div><div class="g">Gauge meter</div><div class="v ok">37</div><div class="d">As of: 12/4/20</div></div>
        <div class="rules"><b>Rules</b><span class="p">Maximo Condition Monitoring Point <span class="link">CL_ASSET</span></span>
          <span class="l">If TEMP-C is less than 30 (Lower Action Limit) then generate work order for Job Plan JP11430A</span>
          <span class="l">If TEMP-C is between 30 (Lower Action Limit) and 35 (Lower Warning Limit) then do nothing</span>
          <span class="l">If TEMP-C is between 40 (Upper Warning Limit) and 45 (Upper Action Limit) then do nothing</span>
          <span class="l">If TEMP-C is more than 45 (Upper Action Limit) then generate work order for Job Plan JP11430</span></div></div>
      <div class="mh"><b>Meter History</b></div>
      <chart-card kind="main"></chart-card>`;
  }
}

@customElement("iot-card")
export class IotCard extends LitElement {
  static styles = [base, css`
    :host { background: #fff; border-bottom: 1px solid #bbb; height: 121px; }
    .h { height: 16.500px; background: #325a8c; color: #e2eaf3; font-size: 5.700px; padding: 0 9px 0 5px; gap: 5px; border-top: 1px solid #24456f; }
  `];
  render() {
    const temp = "79,371 85,367 108,371 112,373 120,362 127,370 135,361 142,372 150,372 160,363 168,368 177,355 187,370 " + "213,370 220,356 225,370 238,356 248,358 254,364 262,357 270,372 280,357 292,362 302,356 310,372 320,358 327,368 336,356 346,370 354,360 363,370 374,356 381,369 392,362 398,371 408,363 416,369 430,358 438,367 449,356 458,360 471,357 480,372 488,361 496,373 506,358 513,370 526,357 540,372 548,357 556,371 568,360 576,371 588,360 594,372 606,358 616,372 624,372 628,331 637,331 642,327 648,333 654,326 660,328 661,362 680,357 688,371 697,357 705,369 713,371";
    const pres = noise(79, 713, 5.700, 408, 428, 23), vib = noise(79, 713, 5.300, 478, 496, 47);
    return html`<div class="row h"><svg width="6" height="6" viewBox="0 0 16 16" fill="none" stroke="#fff" stroke-width="2"><circle cx="8" cy="8" r="7"/><circle cx="8" cy="8" r="2.500"/></svg><span class="grow">IoT Readings</span><span>•••</span></div>
      <svg width="241.300" height="103" viewBox="7 293 724 309" font-size="13.500" fill="#8a8a8a">
        <polygon points="79,497 ${temp} 713,497" fill="#e4eefb"/><polygon points="79,497 ${pres} 713,497" fill="#d9e6f3"/><polygon points="79,497 ${vib} 713,497" fill="#d3cfe0"/>
        ${[173, 279, 385, 489, 595, 701].map((x, i) => svg`<path d="M${x} 311V497" stroke="#c5d0dc" stroke-width="2"/><text x=${x} y="514" text-anchor="middle">${["16:10", "16:20", "16:30", "16:40", "16:50", "17:00"][i]}</text>`)}
        ${[320, 355, 392, 427, 462, 497].map((y, i) => svg`<path d="M79 ${y}H713" stroke="#c5d0dc" stroke-width="2"/><text x="75" y=${y + 8 - (i === 5 ? 5 : 0)} text-anchor="end">${50 - i * 10}</text>`)}
        <g fill="none" stroke-width="3"><polyline points=${temp} stroke="#5b93e3"/><polyline points=${pres} stroke="#b6c6cc"/><polyline points=${vib} stroke="#f9737f"/><path d="M79 311V497" stroke="#bbb" stroke-width="2"/></g>
        <rect x="28" y="526" width="82" height="32" fill="#e8eaec"/><text x="53" y="546" font-size="11.500" fill="#555">1 hour</text><rect x="90" y="533" width="14" height="19" rx="4" fill="#fff" stroke="#2f6fc5" stroke-width="3"/><circle cx="97" cy="542" r="2" fill="#222"/>
        <g fill="none" stroke-width="2"><path d="M117 533q12-3 24 0t24 0 24 0 24 0 24 0 24 0 24 0 24 0 24 0 24 0 24 0 24 0 24 0 24 0 24 0 24 0 24 0 24 0l6-4h27l3 6h38" stroke="#85b4ee"/><path d="M117 541h506" stroke="#d7dde0"/><path d="M117 551q12 2 24 0t24 0 24 0 24 0 24 0 24 0 24 0 24 0 24 0 24 0 24 0 24 0 24 0 24 0 24 0 24 0 24 0 24 0 24 0 24 0h26" stroke="#f79aa2"/></g>
        <rect x="637" y="526" width="79" height="31" fill="#eceeef" stroke="#777" stroke-width="2"/><text x="677" y="545" text-anchor="middle" font-size="10.500" fill="#222" font-weight="700">now</text>
        ${[["temperature", 211, "#4a8ae8"], ["pressure", 296, "#b6c6cc"], ["vibration", 363, "#fa4d56"]].map(([t, x, c]) => svg`<rect x=${Number(x) - 4} y="559" width="8" height="8" rx="2" fill=${c}/><text x=${Number(x) + 8} y="567" font-size="11">${t}</text>`)}
      </svg>`;
  }
}

@customElement("anomaly-chart")
export class AnomalyChart extends LitElement {
  static styles = [base, css`:host { background: #fff; height: 153px; border-left: 1px solid #eee; }`];
  render() {
    const xl = ["Nov 30", "12:00", "Dec 01", "12:00", "Dec 02", "12:00", "Dec 03", "12:00", "Dec 04"];
    const rows: [string, string, string][] = [["Temperature (M...", "40", "#6929c4"], ["Anomaly (FFT)", "8.1", "#1192e8"], ["Anomaly (KMeans)", "3.3", "#9f1853"]];
    const leg: [string, number, string][] = [["Anomaly (FFT)", 749, "#1192e8"], ["Anomaly (Gener...", 823, ""], ["Anomaly (KMeans)", 911, "#9f1853"], ["Anomaly (Salie...", 1002, ""], ["Anomaly (Spect...", 1086, ""]];
    return html`<svg width="356" height="153" viewBox="648 15 1068 459" font-size="9" fill="#555">
      <text x="661" y="36" font-size="10.600" font-weight="700" fill="#333">Temperature Anomalies &amp; Alerts</text><text x="1534" y="36" font-size="10.300" fill="#333">Last 120 hours (default)</text>
      <g fill="none" stroke="#444" stroke-width="1.800"><path d="M1668 27h9v6M1668 27v11h5M1674 34l5 3-5 3z"/><circle cx="1709" cy="32" r="4.500"/><path d="M1706 36l-4 4"/></g>
      ${[...Array(18)].map((_, i) => svg`<path d="M${735 + i * 55.5} 55V408" stroke="#ececec" stroke-width="2"/>`)}
      ${[...Array(7)].map((_, i) => svg`<path d="M690 ${55 + i * 50.4}H1716" stroke="#ececec" stroke-width="2"/>${i < 4 ? svg`<text x="683" y=${58 + i * 50.4} text-anchor="end">${70 - i * 10}</text>` : nothing}`)}
      <path d="M690 55V408H1716" fill="none" stroke="#c9c9c9" stroke-width="3"/>
      ${xl.map((t, i) => svg`<text x=${735 + i * 111} y="422" text-anchor="middle" font-weight=${i % 2 ? 400 : 700}>${t}</text>`)}
      <text x="1203" y="434" text-anchor="middle">Time</text><text transform="translate(671 242) rotate(-90)">Score</text>
      <path d="M874 55V408" stroke="#999" stroke-width="1.500"/>
      <g fill="none" stroke-width="2.400">
      <polyline stroke="#a77bdc" points="690,206 735,206 744,212 754,206 873,206 883,165 893,206 905,206 911,212 918,206 990,206 1005,212 1018,206 1122,206 1133,212 1150,206 1255,212 1265,206 1320,206 1466,226 1476,206 1716,206"/>
      <polyline stroke="#5bb3ea" points="690,345 732,348 737,350 745,375 754,337 772,347 782,349 791,355 803,346 811,345 819,331 830,349 838,355 850,357 874,367 883,85 893,335 902,345 911,307 921,338 930,347 957,331 977,358 995,349 1003,355 1022,338 1031,361 1041,339 1050,355 1069,338 1078,354 1088,341 1096,360 1117,340 1130,343 1160,340 1253,366 1262,352 1275,356 1300,344 1310,347 1316,345 1466,353 1485,347 1493,333 1502,353 1520,343 1532,347 1545,338 1556,348 1575,333 1587,348 1602,337 1610,350 1629,330 1641,342 1652,328 1667,350 1683,345 1697,352 1716,349"/>
      <polyline stroke="#b8406f" points="690,390 732,390 745,394 754,386 772,389 790,390 810,390 819,387 840,390 873,390 883,371 893,382 898,386 911,390 918,387 930,389 990,390 1003,391 1022,386 1031,390 1041,387 1060,390 1090,390 1117,387 1133,385 1160,387 1250,393 1260,390 1480,390 1493,387 1505,391 1600,389 1660,390 1716,388"/></g>
      <rect x="884" y="120" width="97" height="92" rx="3" fill="#fff" stroke="#ddd"/><g fill="#f1f1f1"><path d="M885 121h95v16h-95zM885 157h95v18h-95zM885 193h95v18h-95z"/></g>
      <text x="889" y="133" font-size="8.500">11/30/2020 12:00:00</text>${rows.map(([a, b, c], i) => svg`<path d="M886 ${140 + i * 18}v15" stroke=${c} stroke-width="4"/><text x="891" y=${151 + i * 18} font-size="8.200">${a}</text><text x="977" y=${151 + i * 18} font-size="8.200" text-anchor="end">${b}</text>`)}<text x="888" y="206" font-size="8.500">Total</text><text x="976" y="206" font-size="8.500" text-anchor="end">51.3</text>
      <text x="731" y="460" font-size="9">T...</text>
      ${leg.map(([t, x, c]) => svg`<rect x=${x} y="451" width="10" height="10" fill=${c || "#fff"} stroke=${c || "#666"} stroke-width="1.500"/>${c ? svg`<path d="M${x + 2} 456l2.500 2.500 4-5" stroke="#fff" stroke-width="1.500" fill="none"/>` : nothing}<text x=${x + 13} y="460" font-size="8.600">${t}</text>`)}
    </svg>`;
  }
}

@customElement("app-root")
export class AppRoot extends LitElement {
  static styles = css`
    :host { display: block; position: relative; width: 2083px; height: 1072px; background: #fff; overflow: hidden; }
    .win { position: absolute; }
    .w-add { left: 1px; top: 2px; width: 180px; }
    .w-over { left: 193px; top: 2px; width: 531px; }
    .w-health { left: 47px; top: 292px; width: 530px; }
    .w-meters { left: 752px; top: 3px; width: 717px; }
    .w-compare { left: 752px; top: 199px; width: 424px; }
    .w-early { left: 1197px; top: 345px; width: 262px; font-size: 7.450px; }
    .w-wide { left: 1482px; top: 356px; width: 306px; font-size: 8.700px; }
    .w-tail { left: 1205px; top: 672px; width: 225px; font-size: 6.370px; }
    .w-anom { left: 871px; top: 595px; width: 357px; }
    .w-iot { left: 657px; top: 671px; width: 241px; }
    .w-half { left: 877.500px; top: 857px; width: 305.500px; font-size: 8.670px; }
    .w-close { left: 1774px; top: 922px; width: 305.500px; font-size: 8.690px; }
    .num { position: absolute; font: 22px/16px "Liberation Sans", Arial, sans-serif; color: #f00; -webkit-text-stroke: .4px #f00; }
    .n1 { left: 95.500px; top: 65px; } .n2 { left: 635px; top: 136px; } .n3 { left: 415px; top: 394px; }
    .n4 { left: 1231px; top: 73px; } .n5 { left: 1044px; top: 348px; } .n6 { left: 1108.500px; top: 624px; }
    .close { position: absolute; left: 167.500px; top: 0; width: 14px; height: 14px; }
  `;
  render() {
    return html`
      <add-card-dialog class="win w-add"></add-card-dialog>
      <svg class="close" viewBox="0 0 14 14"><circle cx="7" cy="7" r="6.500" fill="#666" stroke="#999" stroke-width=".6"/><path d="M4.500 4.500l5 5M9.500 4.500l-5 5" stroke="#fff" stroke-width="1.300"/></svg>
      <overview-window class="win w-over"></overview-window>
      <health-window class="win w-health"></health-window>
      <meters-window class="win w-meters"></meters-window>
      <compare-window class="win w-compare"></compare-window>
      <chart-card kind="early" class="win w-early"></chart-card>
      <chart-card kind="wide" class="win w-wide"></chart-card>
      <chart-card kind="tail" class="win w-tail"></chart-card>
      <anomaly-chart class="win w-anom"></anomaly-chart>
      <iot-card class="win w-iot"></iot-card>
      <chart-card kind="half" class="win w-half"></chart-card>
      <chart-card kind="close" class="win w-close"></chart-card>
      ${[1, 2, 3, 4, 5, 6].map(n => html`<span class="num n${n}">${n}.</span>`)}`;
  }
}
